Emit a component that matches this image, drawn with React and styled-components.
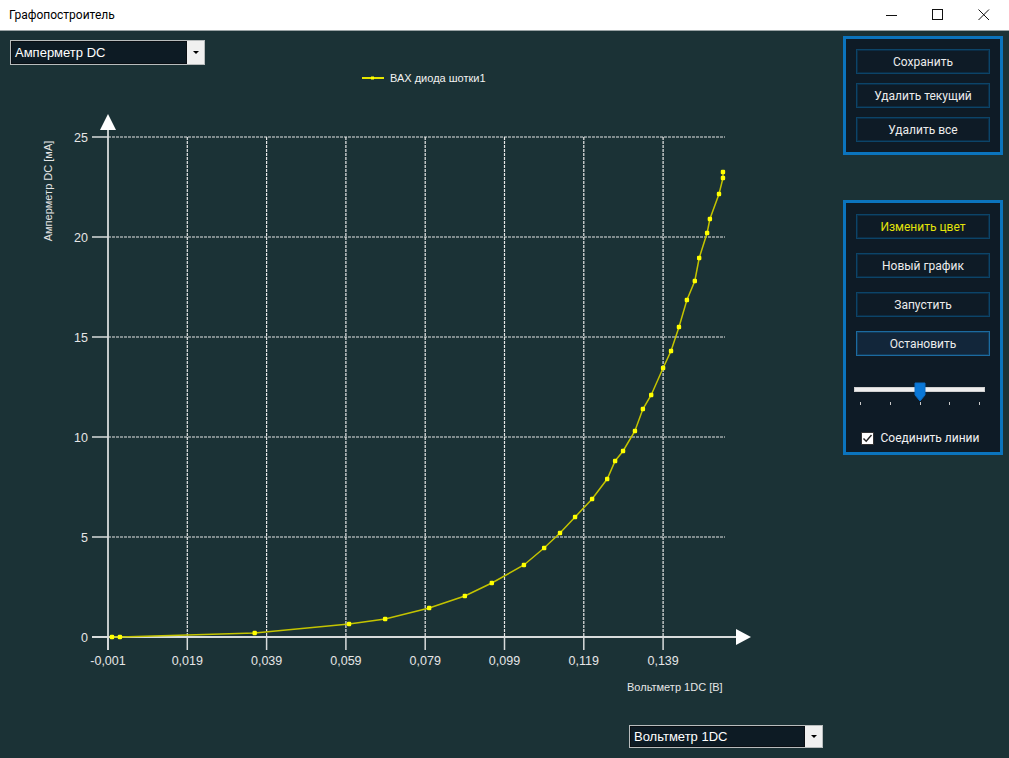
import React from 'react';
import styled, { createGlobalStyle } from 'styled-components';

const GlobalStyle = createGlobalStyle`
  html, body {
    margin: 0;
    padding: 0;
    background: #1b3236;
  }
  * { box-sizing: border-box; }
`;

// измерения: напряжение [В], ток [мА]
const points = [
  [0.0, 0], [0.002, 0], [0.036, 0.2], [0.0598, 0.65], [0.0689, 0.9],
  [0.08, 1.45], [0.089, 2.05], [0.0958, 2.7], [0.1039, 3.6], [0.109, 4.45],
  [0.113, 5.2], [0.1168, 6.0], [0.1211, 6.9], [0.1249, 7.9], [0.1269, 8.8],
  [0.1289, 9.3], [0.1319, 10.3], [0.1339, 11.4], [0.136, 12.1], [0.139, 13.45],
  [0.141, 14.3], [0.143, 15.5], [0.145, 16.85], [0.147, 17.8], [0.1481, 18.95],
  [0.1501, 20.2], [0.1508, 20.9], [0.1531, 22.15], [0.1541, 22.95], [0.1541, 23.25],
];

const X0 = 108;
const XSTEP = 79.3;
const Y0 = 637;
const YSTEP = 100;
const px = (v) => X0 + ((v + 0.001) / 0.02) * XSTEP;
const py = (i) => Y0 - i * 20;

const xTicks = ['-0,001', '0,019', '0,039', '0,059', '0,079', '0,099', '0,119', '0,139'];
const yTicks = ['0', '5', '10', '15', '20', '25'];

const Window = styled.div`
  width: 1009px;
  height: 758px;
  display: flex;
  flex-direction: column;
  background: #1b3236;
  overflow: hidden;
`;

const TitleBar = styled.div`
  height: 31px;
  background: #ffffff;
  border-bottom: 1px solid #9aa3a5;
  display: flex;
  align-items: center;
  justify-content: space-between;
  padding-left: 9px;
  font-family: Roboto, "Noto Sans", sans-serif;
  font-size: 12px;
  color: #000;
`;

const WinControls = styled.div`
  display: flex;
  height: 100%;
  padding-right: 2px;
`;

const WinButton = styled.div`
  width: 46px;
  height: 100%;
  display: flex;
  align-items: center;
  justify-content: center;
`;

const Body = styled.div`
  flex: 1;
  display: flex;
`;

const ChartColumn = styled.div`
  width: 843px;
  display: flex;
  flex-direction: column;
`;

const Combo = styled.div`
  width: ${(p) => p.$w}px;
  height: ${(p) => p.$h}px;
  margin-left: ${(p) => p.$left}px;
  margin-top: ${(p) => p.$top}px;
  border: 1px solid #b8bcbd;
  background: #0d1b24;
  display: flex;
  font-family: "Liberation Sans", Arial, sans-serif;
  font-size: 13px;
  color: #ffffff;
`;

const ComboText = styled.div`
  flex: 1;
  display: flex;
  align-items: center;
  padding-left: 3px;
  border: 1px solid #0a0f14;
`;

const ComboArrow = styled.div`
  width: 17px;
  background: #f0f0f0;
  display: flex;
  align-items: center;
  justify-content: center;
  &::after {
    content: '';
    border-left: 3px solid transparent;
    border-right: 3px solid transparent;
    border-top: 3px solid #000;
  }
`;

const ChartSvg = styled.svg`
  display: block;
  width: 843px;
  height: 660px;
  font-family: "Liberation Sans", Arial, sans-serif;
`;

const Sidebar = styled.div`
  width: 160px;
  display: flex;
  flex-direction: column;
  gap: 45px;
  padding-top: 5px;
`;

const Panel = styled.div`
  border: 3px solid #0b74bd;
  background: #0e1b26;
  display: flex;
  flex-direction: column;
  align-items: center;
  gap: ${(p) => p.$gap}px;
  padding: ${(p) => p.$pad};
`;

const Button = styled.div`
  width: 134px;
  height: 25px;
  flex-shrink: 0;
  border: 1px solid ${(p) => (p.$active ? '#1c6aa0' : '#0c4468')};
  box-shadow: inset 0 0 0 1px ${(p) => (p.$active ? '#123a58' : '#0b2c44')};
  background: ${(p) => (p.$active ? '#12263a' : '#0e1b26')};
  color: ${(p) => (p.$yellow ? '#e4e40a' : '#ececec')};
  font-family: Roboto, "Noto Sans", sans-serif;
  font-size: 12px;
  display: flex;
  align-items: center;
  justify-content: center;
`;

const SliderBox = styled.div`
  width: 131px;
  align-self: flex-start;
  margin-left: 8px;
  margin-top: 17px;
  display: flex;
  flex-direction: column;
  gap: 10px;
`;

const Track = styled.div`
  position: relative;
  height: 5px;
  background: #eeeeee;
  border: 1px solid #d0d0d0;
`;

const Thumb = styled.svg`
  position: absolute;
  left: 59px;
  top: -6px;
`;

const Ticks = styled.div`
  display: flex;
  justify-content: space-between;
  padding: 0 5px 0 6px;
  span {
    width: 1px;
    height: 3px;
    background: #c8c8c8;
  }
`;

const CheckRow = styled.div`
  display: flex;
  align-items: center;
  gap: 7px;
  margin-top: 12px;
  margin-left: -6px;
  font-family: Roboto, "Noto Sans", sans-serif;
  font-size: 12px;
  color: #f2f2f2;
`;

const CheckBox = styled.span`
  width: 13px;
  height: 13px;
  background: #ffffff;
  border: 1px solid #333;
  display: flex;
  align-items: center;
  justify-content: center;
`;

const Chart = () => {
  const linePts = points.map(([v, i]) => `${px(v).toFixed(1)},${py(i).toFixed(1)}`).join(' ');
  return (
    <ChartSvg viewBox="0 65 843 660">
      {/* горизонтальная сетка */}
      {yTicks.map((t, k) => {
        const y = Y0 - k * YSTEP;
        return (
          <g key={t}>
            <line x1={92} y1={y} x2={108} y2={y} stroke="#d8dcdc" strokeWidth="1.5" />
            {k > 0 && (
              <line x1={108} y1={y} x2={725} y2={y} stroke="#e6e6e6" strokeWidth="1.2" strokeDasharray="3 1" />
            )}
            <text x={88} y={y + 4.5} fill="#e6e6e6" fontSize="12.5" textAnchor="end">{t}</text>
          </g>
        );
      })}
      {/* вертикальная сетка */}
      {xTicks.map((t, k) => {
        const x = X0 + k * XSTEP;
        return (
          <g key={t}>
            {k > 0 && (
              <line x1={x} y1={137} x2={x} y2={637} stroke="#e6e6e6" strokeWidth="1.2" strokeDasharray="3 1" />
            )}
            <line x1={x} y1={637} x2={x} y2={650} stroke="#d8dcdc" strokeWidth="1.5" />
            <text x={x} y={665} fill="#e6e6e6" fontSize="12.5" textAnchor="middle">{t}</text>
          </g>
        );
      })}
      {/* оси */}
      <line x1={92} y1={637} x2={738} y2={637} stroke="#d8dcdc" strokeWidth="1.8" />
      <polygon points="736,629 751,637 736,645" fill="#ffffff" />
      <line x1={108} y1={650} x2={108} y2={128} stroke="#d8dcdc" strokeWidth="1.8" />
      <polygon points="100,130 108,114 116,130" fill="#ffffff" />

      <text
        transform="translate(52,191) rotate(-90)"
        fill="#e6e6e6"
        fontSize="11"
        textAnchor="middle"
      >
        Амперметр DC [мА]
      </text>
      <text x={627} y={691} fill="#e6e6e6" fontSize="11">Вольтметр 1DC [В]</text>

      {/* легенда */}
      <line x1={362} y1={78} x2={384} y2={78} stroke="#e6e600" strokeWidth="2" />
      <rect x={371} y={76.5} width={3} height={3} fill="#ffff00" />
      <text x={390} y={82} fill="#f2f2f2" fontSize="11">ВАХ диода шотки1</text>

      {/* кривая */}
      <polyline points={linePts} fill="none" stroke="#c4c400" strokeWidth="1.5" />
      {points.map(([v, i], k) => (
        <rect key={k} x={px(v) - 2.2} y={py(i) - 2.2} width={4.4} height={4.4} rx={1.2} fill="#ffff00" />
      ))}
    </ChartSvg>
  );
};

export default function App() {
  return (
    <Window>
      <GlobalStyle />
      <TitleBar>
        <span>Графопостроитель</span>
        <WinControls>
          <WinButton>
            <svg width="12" height="12" viewBox="0 0 12 12">
              <line x1="0" y1="6.5" x2="11" y2="6.5" stroke="#111" strokeWidth="1" />
            </svg>
          </WinButton>
          <WinButton>
            <svg width="12" height="12" viewBox="0 0 12 12">
              <rect x="0.5" y="0.5" width="10" height="10" fill="none" stroke="#111" strokeWidth="1" />
            </svg>
          </WinButton>
          <WinButton>
            <svg width="12" height="12" viewBox="0 0 12 12">
              <path d="M0.5 0.5 L11 11 M11 0.5 L0.5 11" stroke="#111" strokeWidth="1" />
            </svg>
          </WinButton>
        </WinControls>
      </TitleBar>
      <Body>
        <ChartColumn>
          <Combo $w={195} $h={25} $left={10} $top={9}>
            <ComboText>Амперметр DC</ComboText>
            <ComboArrow />
          </Combo>
          <Chart />
          <Combo $w={194} $h={23} $left={629} $top={0}>
            <ComboText>Вольтметр 1DC</ComboText>
            <ComboArrow />
          </Combo>
        </ChartColumn>
        <Sidebar>
          <Panel $gap={9} $pad="10px 0 10px">
            <Button>Сохранить</Button>
            <Button>Удалить текущий</Button>
            <Button>Удалить все</Button>
          </Panel>
          <Panel $gap={14} $pad="11px 0 7px">
            <Button $yellow>Изменить цвет</Button>
            <Button>Новый график</Button>
            <Button>Запустить</Button>
            <Button $active>Остановить</Button>
            <SliderBox>
              <Track>
                <Thumb width="12" height="20" viewBox="0 0 12 20">
                  <path d="M1 1 H11 V13 L6 19 L1 13 Z" fill="#0a78d7" stroke="#0a6cc4" />
                </Thumb>
              </Track>
              <Ticks>
                <span /><span /><span /><span /><span />
              </Ticks>
            </SliderBox>
            <CheckRow>
              <CheckBox>
                <svg width="11" height="11" viewBox="0 0 11 11">
                  <path d="M1.5 5.5 L4.2 8.3 L9.5 2" fill="none" stroke="#222" strokeWidth="1.4" />
                </svg>
              </CheckBox>
              Соединить линии
            </CheckRow>
          </Panel>
        </Sidebar>
      </Body>
    </Window>
  );
}
